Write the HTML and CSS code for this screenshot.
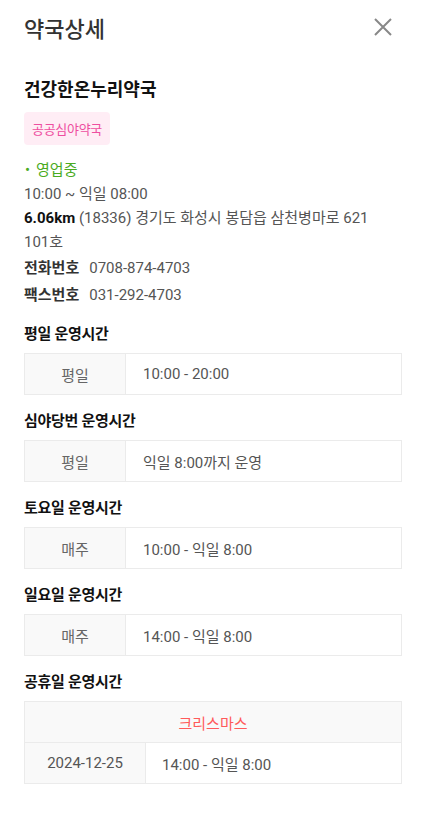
FILE: index.html
```html
<!DOCTYPE html>
<html lang="ko">
<head>
  <meta charset="UTF-8">
  <meta name="viewport" content="width=device-width, initial-scale=1.0">
  <title>약국상세</title>
  <link rel="stylesheet" href="styles.css">
</head>
<body>
  <div id="panel">
    <div class="header">
      <h1>약국상세</h1>
      <button class="close-btn" aria-label="닫기">
        <svg width="18" height="18" viewBox="0 0 18 18"><path d="M1 1 L17 17 M17 1 L1 17" stroke="#888" stroke-width="2" fill="none"/></svg>
      </button>
    </div>

    <h2 class="name">건강한온누리약국</h2>
    <span class="badge">공공심야약국</span>

    <div class="info">
      <div class="status">영업중</div>
      <div>10:00 ~ 익일 08:00</div>
      <div class="addr"><span class="dist">6.06km</span> (18336) 경기도 화성시 봉담읍 삼천병마로 621 101호</div>
      <div class="contact"><span class="label">전화번호</span>0708-874-4703</div>
      <div class="contact"><span class="label">팩스번호</span>031-292-4703</div>
    </div>

    <h3>평일 운영시간</h3>
    <table class="hours">
      <tr><th>평일</th><td>10:00 - 20:00</td></tr>
    </table>

    <h3>심야당번 운영시간</h3>
    <table class="hours">
      <tr><th>평일</th><td>익일 8:00까지 운영</td></tr>
    </table>

    <h3>토요일 운영시간</h3>
    <table class="hours">
      <tr><th>매주</th><td>10:00 - 익일 8:00</td></tr>
    </table>

    <h3>일요일 운영시간</h3>
    <table class="hours">
      <tr><th>매주</th><td>14:00 - 익일 8:00</td></tr>
    </table>

    <h3>공휴일 운영시간</h3>
    <table class="hours holiday">
      <tr><th colspan="2" class="holiday-name">크리스마스</th></tr>
      <tr><th>2024-12-25</th><td>14:00 - 익일 8:00</td></tr>
    </table>
  </div>
</body>
</html>
```

FILE: styles.css
```css
body {
  margin: 0;
  padding: 0;
  font-family: Roboto, "Noto Sans CJK KR", sans-serif;
  background: #fff;
  color: #222;
}
#panel {
  padding: 12px 21px 40px 24px;
}
.header {
  display: flex;
  justify-content: space-between;
  align-items: center;
  height: 30px;
}
.header h1 {
  margin: 0;
  font-size: 22px;
  font-weight: 500;
  color: #333;
}
.close-btn {
  background: none;
  border: none;
  padding: 0;
  margin-right: 10px;
  cursor: pointer;
  display: flex;
}
.name {
  margin: 33px 0 11px;
  font-size: 18px;
  font-weight: 700;
  color: #111;
}
.badge {
  display: inline-block;
  background-color: #ffedf5;
  color: #ee4ea0;
  font-size: 13px;
  letter-spacing: -0.3px;
  padding: 7px 8px;
  border-radius: 4px;
}
.info {
  margin-top: 13px;
  font-size: 15px;
  line-height: 24px;
  color: #555;
}
.status {
  color: #4bab1f;
}
.status::before {
  content: "•";
  margin: 0 6px 0 1px;
}
.addr {
  word-break: keep-all;
}
.dist {
  color: #111;
  font-weight: 700;
}
.contact {
  line-height: 26px;
  margin-top: 1px;
}
.contact .label {
  color: #333;
  font-weight: 700;
  margin-right: 10px;
}
h3 {
  margin: 14px 0 10px;
  font-size: 15px;
  font-weight: 700;
  letter-spacing: -0.3px;
  color: #111;
}
.hours {
  width: 100%;
  border-collapse: collapse;
  font-size: 15px;
  color: #555;
}
.hours th, .hours td {
  border: 1px solid #ebebeb;
  height: 40px;
  padding: 0;
}
.hours th {
  width: 100px;
  background-color: #f9f9f9;
  font-weight: 400;
  color: #666;
}
.hours td {
  padding-left: 17px;
}
.holiday th {
  width: 120px;
  color: #555;
}
.holiday td {
  padding-left: 16px;
}
.holiday .holiday-name {
  color: #ff5a5a;
}
```
